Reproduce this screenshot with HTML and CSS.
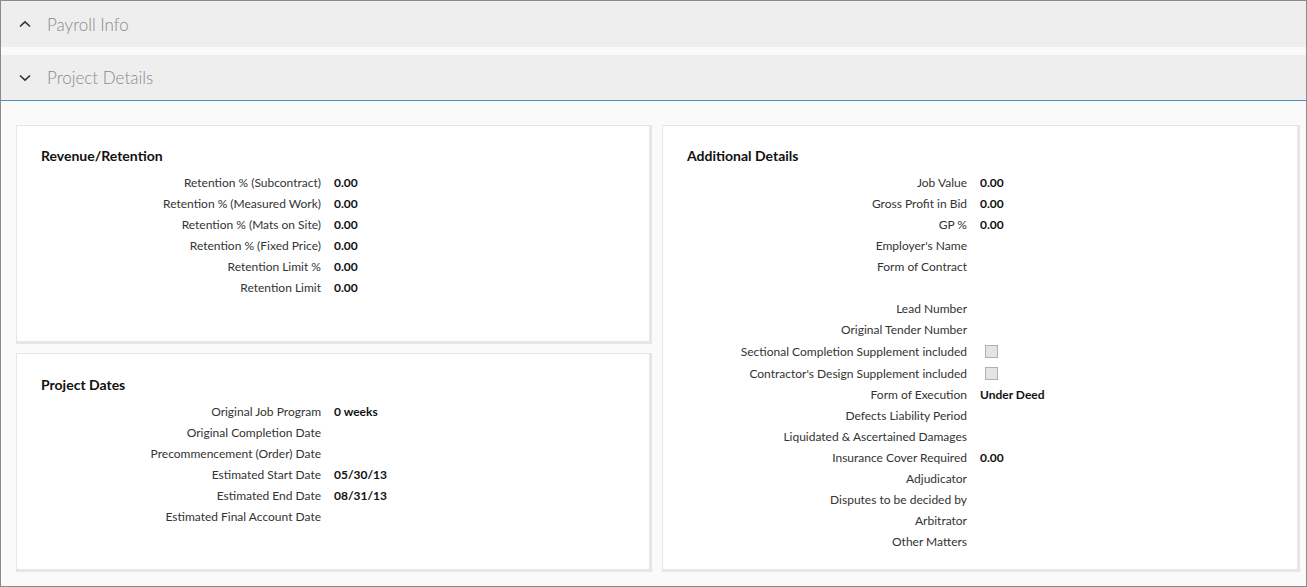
FILE: index.html
```html
<!DOCTYPE html>
<html>
<head>
<meta charset="utf-8">
<link rel="stylesheet" href="styles.css">
</head>
<body>
<div class="page">
  <div class="acc-header first">
    <svg class="chev" width="12" height="8" viewBox="0 0 12 8"><path d="M1 6.5 L6 1.8 L11 6.5" fill="none" stroke="#333" stroke-width="1.6"/></svg>
    <span class="acc-title">Payroll Info</span>
  </div>
  <div class="acc-header open">
    <svg class="chev" width="12" height="8" viewBox="0 0 12 8"><path d="M1 1.5 L6 6.2 L11 1.5" fill="none" stroke="#333" stroke-width="1.6"/></svg>
    <span class="acc-title">Project Details</span>
  </div>
  <div class="content">
    <div class="col">
      <section class="card short">
        <h3 class="card-title">Revenue/Retention</h3>
        <div class="rows">
          <div class="row"><span class="lbl">Retention % (Subcontract)</span><span class="val">0.00</span></div>
          <div class="row"><span class="lbl">Retention % (Measured Work)</span><span class="val">0.00</span></div>
          <div class="row"><span class="lbl">Retention % (Mats on Site)</span><span class="val">0.00</span></div>
          <div class="row"><span class="lbl">Retention % (Fixed Price)</span><span class="val">0.00</span></div>
          <div class="row"><span class="lbl">Retention Limit %</span><span class="val">0.00</span></div>
          <div class="row"><span class="lbl">Retention Limit</span><span class="val">0.00</span></div>
        </div>
      </section>
      <section class="card short dates">
        <h3 class="card-title">Project Dates</h3>
        <div class="rows">
          <div class="row"><span class="lbl">Original Job Program</span><span class="val">0 weeks</span></div>
          <div class="row"><span class="lbl">Original Completion Date</span><span class="val"></span></div>
          <div class="row"><span class="lbl">Precommencement (Order) Date</span><span class="val"></span></div>
          <div class="row"><span class="lbl">Estimated Start Date</span><span class="val">05/30/13</span></div>
          <div class="row"><span class="lbl">Estimated End Date</span><span class="val">08/31/13</span></div>
          <div class="row"><span class="lbl">Estimated Final Account Date</span><span class="val"></span></div>
        </div>
      </section>
    </div>
    <section class="card tall">
      <h3 class="card-title">Additional Details</h3>
      <div class="rows">
        <div class="row"><span class="lbl">Job Value</span><span class="val">0.00</span></div>
        <div class="row"><span class="lbl">Gross Profit in Bid</span><span class="val">0.00</span></div>
        <div class="row"><span class="lbl">GP %</span><span class="val">0.00</span></div>
        <div class="row"><span class="lbl">Employer's Name</span><span class="val"></span></div>
        <div class="row"><span class="lbl">Form of Contract</span><span class="val"></span></div>
        <div class="row"><span class="lbl"></span><span class="val"></span></div>
        <div class="row"><span class="lbl">Lead Number</span><span class="val"></span></div>
        <div class="row"><span class="lbl">Original Tender Number</span><span class="val"></span></div>
        <div class="row check"><span class="lbl">Sectional Completion Supplement included</span><span class="val"><span class="box"></span></span></div>
        <div class="row check"><span class="lbl">Contractor's Design Supplement included</span><span class="val"><span class="box"></span></span></div>
        <div class="row"><span class="lbl">Form of Execution</span><span class="val">Under Deed</span></div>
        <div class="row"><span class="lbl">Defects Liability Period</span><span class="val"></span></div>
        <div class="row"><span class="lbl">Liquidated &amp; Ascertained Damages</span><span class="val"></span></div>
        <div class="row"><span class="lbl">Insurance Cover Required</span><span class="val">0.00</span></div>
        <div class="row"><span class="lbl">Adjudicator</span><span class="val"></span></div>
        <div class="row"><span class="lbl">Disputes to be decided by</span><span class="val"></span></div>
        <div class="row"><span class="lbl">Arbitrator</span><span class="val"></span></div>
        <div class="row"><span class="lbl">Other Matters</span><span class="val"></span></div>
      </div>
    </section>
  </div>
</div>
</body>
</html>
```
FILE: styles.css
```css
* { box-sizing: border-box; }
html, body { margin: 0; padding: 0; background: #fff; }
body { font-family: Lato, "Open Sans", sans-serif; color: #333; }

.page {
  width: 1307px;
  height: 587px;
  border: 1px solid #8a8a8a;
  background: #fafafa;
  overflow: hidden;
}

.acc-header {
  display: flex;
  align-items: center;
  background: #eeeeee;
  padding-left: 18px;
}
.acc-header.first { height: 46px; margin-bottom: 8px; }
.acc-header.open { height: 46px; border-bottom: 1px solid #4a90b9; }
.chev { display: block; flex: none; }
.acc-title {
  margin-left: 16px;
  font-size: 17px;
  font-weight: 300;
  color: #8a8a8a;
}

.content {
  display: grid;
  grid-template-columns: 636px 638px;
  column-gap: 10px;
  padding: 24px 0 0 15px;
}
.col {
  display: flex;
  flex-direction: column;
  gap: 9px;
}
.card {
  background: #fff;
  border: 1px solid #e6e6e6;
  border-right-width: 3px;
  border-bottom-width: 3px;
  padding: 21px 24px 0 24px;
}
.card.short { height: 219px; }
.card.dates { padding-top: 22px; }
.card.tall { height: 447px; }

.card-title {
  margin: 0 0 8px 0;
  font-size: 14px;
  line-height: 17px;
  font-weight: 700;
  color: #111;
}

.row {
  display: grid;
  grid-template-columns: 280px auto;
  column-gap: 13px;
  height: 21px;
  align-items: center;
  font-size: 12px;
}
.row.check { height: 22px; }
.lbl { text-align: right; color: #333; }
.val { font-weight: 700; color: #111; display: flex; align-items: center; }
.box {
  display: block;
  width: 13px;
  height: 13px;
  margin-left: 5px;
  background: #e4e4e4;
  border: 1px solid #b0b0b0;
}
```
